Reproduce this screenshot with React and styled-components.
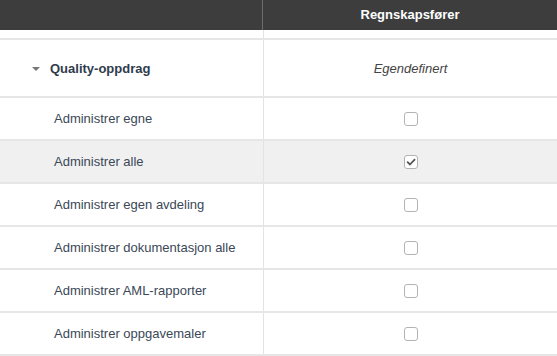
import styled, { createGlobalStyle } from 'styled-components';

const GlobalStyle = createGlobalStyle`
  html, body {
    margin: 0;
    padding: 0;
    background: #fff;
  }
  body {
    font-family: "Liberation Sans", Arial, sans-serif;
    font-size: 13px;
    color: #3b4858;
  }
`;

const rights = [
    { label: 'Administrer egne', checked: false },
    { label: 'Administrer alle', checked: true, highlight: true },
    { label: 'Administrer egen avdeling', checked: false },
    { label: 'Administrer dokumentasjon alle', checked: false },
    { label: 'Administrer AML-rapporter', checked: false },
    { label: 'Administrer oppgavemaler', checked: false },
];

const Checkbox = ({ checked }) => (
    <Box>
        {checked && (
            <svg width="10" height="10" viewBox="0 0 10 10">
                <path d="M1.6 5.2 L4 7.5 L8.6 2.6" fill="none" stroke="#555" strokeWidth="1.8" strokeLinecap="round" strokeLinejoin="round" />
            </svg>
        )}
    </Box>
);

const App = () => {
    return (
        <>
            <GlobalStyle />
            <Table>
                <HeaderRow>
                    <HeaderCell />
                    <HeaderCell $center>Regnskapsfører</HeaderCell>
                </HeaderRow>
                <Spacer>
                    <Cell />
                    <Cell $center />
                </Spacer>
                <GroupRow>
                    <GroupCell>
                        <Caret />
                        Quality-oppdrag
                    </GroupCell>
                    <Cell $center><Italic>Egendefinert</Italic></Cell>
                </GroupRow>
                {rights.map((r) => (
                    <Row key={r.label} $highlight={r.highlight}>
                        <LabelCell>{r.label}</LabelCell>
                        <Cell $center><Checkbox checked={r.checked} /></Cell>
                    </Row>
                ))}
            </Table>
        </>
    );
};

export default App;


const Table = styled.div`
    width: 557px;
    display: flex;
    flex-direction: column;
`

const BaseRow = styled.div`
    display: grid;
    grid-template-columns: 263px 1fr;
`

const HeaderRow = styled(BaseRow)`
    height: 30px;
    background: #3d3d3d;
`

const HeaderCell = styled.div`
    display: flex;
    align-items: center;
    justify-content: ${p => p.$center ? 'center' : 'flex-start'};
    color: #fff;
    font-weight: 700;
    font-size: 13px;
    padding-bottom: 1px;
    border-right: ${p => p.$center ? 'none' : '1px solid #6b6b6b'};
`

const Cell = styled.div`
    display: flex;
    align-items: center;
    justify-content: ${p => p.$center ? 'center' : 'flex-start'};
    border-left: ${p => p.$center ? '1px solid #e3e3e3' : 'none'};
`

const Spacer = styled(BaseRow)`
    height: 8px;
    border-bottom: 2px solid #e6e6e6;
`

const GroupRow = styled(BaseRow)`
    height: 56px;
    border-bottom: 2px solid #e6e6e6;
`

const GroupCell = styled.div`
    display: flex;
    align-items: center;
    gap: 10px;
    padding-left: 32px;
    font-weight: 700;
    font-size: 13px;
    color: #2f3c4c;
`

const Caret = styled.span`
    width: 0;
    height: 0;
    border-left: 4px solid transparent;
    border-right: 4px solid transparent;
    border-top: 4px solid #777;
    margin-top: 1px;
`

const Italic = styled.span`
    font-style: italic;
    color: #444;
`

const Row = styled(BaseRow)`
    height: 41px;
    background: ${p => p.$highlight ? '#f0f0f0' : '#fff'};
    border-bottom: 2px solid #e6e6e6;
`

const LabelCell = styled.div`
    display: flex;
    align-items: center;
    padding-left: 54px;
`

const Box = styled.span`
    box-sizing: border-box;
    width: 14px;
    height: 14px;
    border: 1px solid #b3b3b3;
    border-radius: 3px;
    background: #fff;
    display: flex;
    align-items: center;
    justify-content: center;
`
